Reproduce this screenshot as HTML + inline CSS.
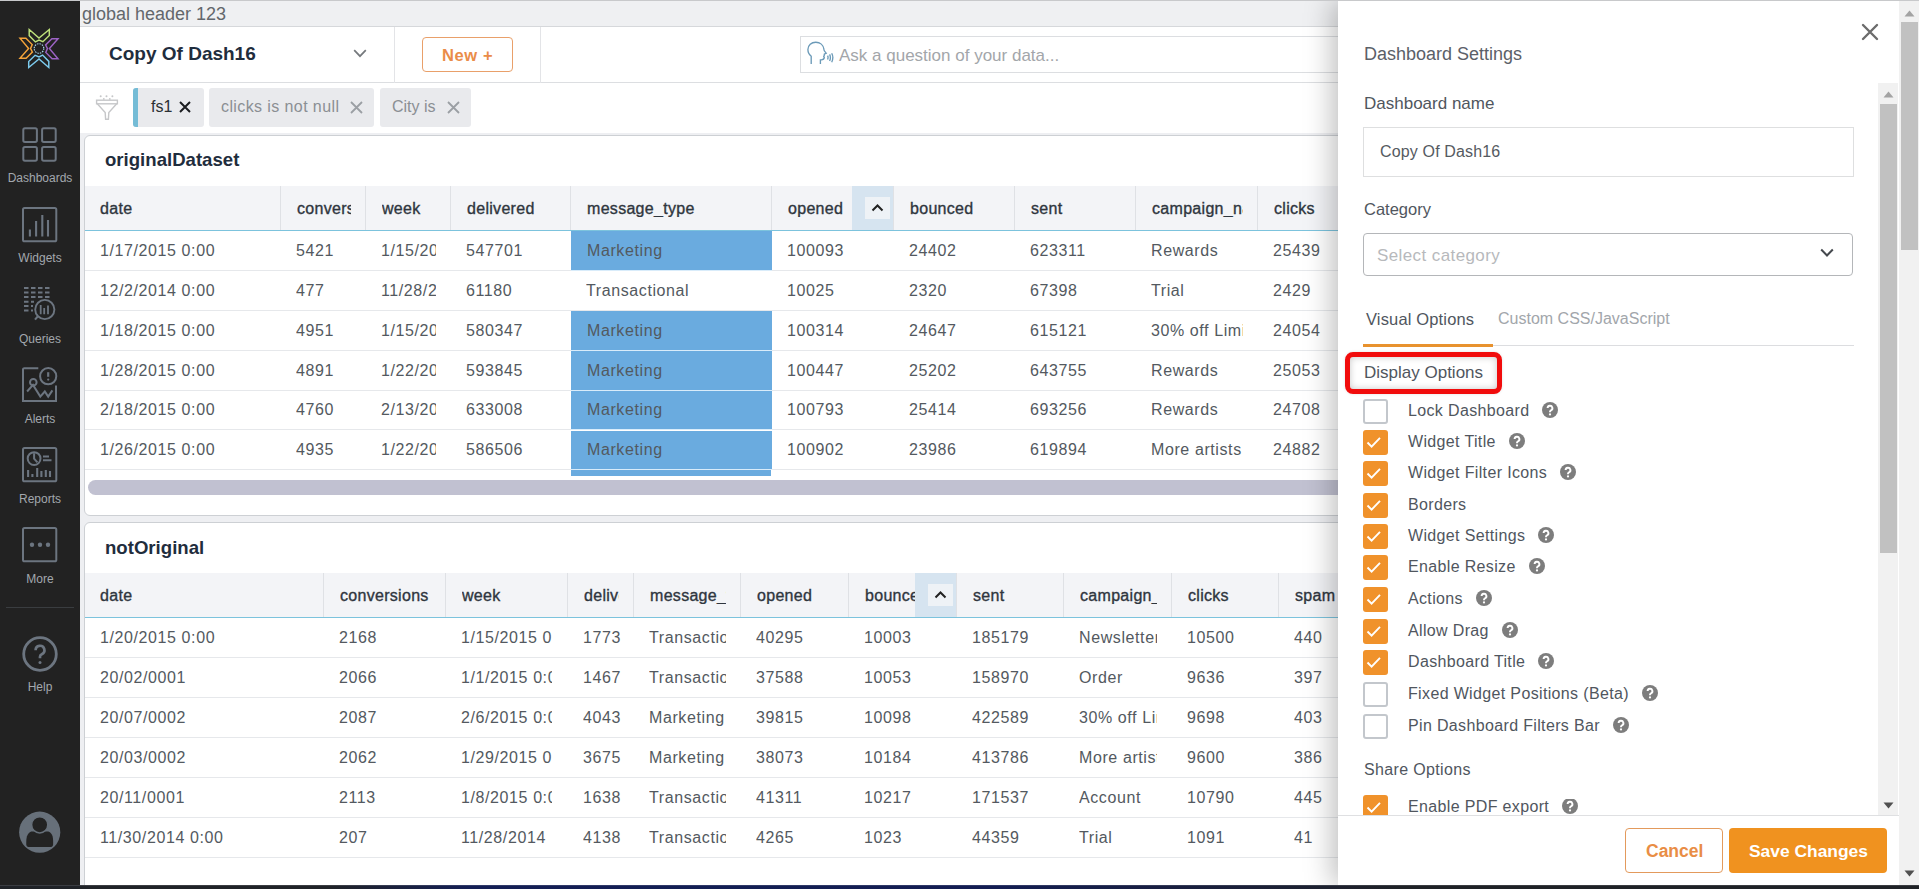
<!DOCTYPE html><html><head><meta charset="utf-8"><style>
*{box-sizing:border-box;margin:0;padding:0}
html,body{width:1919px;height:889px;overflow:hidden;background:#eeeff2;font-family:"Liberation Sans",sans-serif;position:relative}
.a{position:absolute}
.t{position:absolute;white-space:nowrap;line-height:1}
#side{left:0;top:0;width:80px;height:885px;background:#222222}
.sl{position:absolute;left:0;width:80px;text-align:center;color:#a3a8ae;font-size:12px;line-height:1}
.ic{position:absolute;left:0;width:80px;height:40px}
#gh{left:80px;top:0;width:1258px;height:27px;background:#eff0f2;border-bottom:1px solid #d6d8db}
#hdr{left:80px;top:27px;width:1258px;height:56px;background:#fff;border-bottom:1px solid #dcdee1}
#fbar{left:80px;top:83px;width:1258px;height:50px;background:#fff}
.chip{position:absolute;top:88px;height:39px;background:#e9eaed;border-radius:3px}
.card{position:absolute;left:84px;width:1320px;background:#fff;border:1px solid #cdd0d4;border-radius:6px;overflow:hidden}
.th{position:absolute;background:#f3f4f7;border-left:1px solid #dfe1e5;overflow:hidden}
.th span{position:absolute;left:16px;right:14px;overflow:hidden;white-space:nowrap;font-size:16px;font-weight:normal;-webkit-text-stroke:0.35px #2f363e;color:#2f363e;line-height:1;letter-spacing:0.3px}
.row{position:absolute;left:0;width:1320px;border-bottom:1px solid #e6e8eb}
.td{position:absolute;overflow:hidden;height:100%}
.td span{position:absolute;left:16px;right:14px;overflow:hidden;white-space:nowrap;font-size:16px;color:#535960;line-height:1;letter-spacing:0.6px}
#panel{left:1338px;top:0;width:561px;height:885px;background:#fff;box-shadow:-6px 0 26px rgba(0,0,0,0.25)}
.pl{position:absolute;white-space:nowrap;line-height:1;color:#50565e;font-size:16px}
.cb{position:absolute;left:1363px;width:25px;height:25px;border-radius:3px}
.cb.on{background:#f0922b}
.cb.off{border:2px solid #c3c7cc;background:#fff}
.help{position:absolute;width:16px;height:16px;border-radius:50%;background:#7f7f7f;color:#fff;font-size:12px;font-weight:bold;text-align:center;line-height:16px}
</style></head><body>
<div class="a" style="left:0;top:0;width:1919px;height:1px;background:#c8c9cb;z-index:90"></div>
<div id="side" class="a"></div>
<svg class="a" style="left:16px;top:25px" width="46" height="46" viewBox="-23 -23.5 46 46">
<defs><path id="chev" d="M-9.8 -19L0 -10.4L10.3 -19V-13.1L3.9 -6.8L0 -8.4L-3.6 -6.6L-9.8 -12.9Z" fill="none" stroke-width="1.45" stroke-linejoin="miter"/></defs>
<use href="#chev" stroke="#bde07a"/>
<use href="#chev" stroke="#9c63c4" transform="rotate(90)"/>
<use href="#chev" stroke="#7ccbee" transform="rotate(180)"/>
<use href="#chev" stroke="#f4a33a" transform="rotate(270)"/>
<circle cx="0" cy="0" r="4.8" fill="none" stroke="#a9d6ee" stroke-width="1.1" stroke-dasharray="1.5 1.0"/>
</svg>
<svg class="a" style="left:22px;top:127px" width="36" height="36" viewBox="0 0 36 36" fill="none" stroke="#6c7580" stroke-width="2.2">
<g stroke-width="2"><rect x="1.3" y="1.3" width="13.6" height="13.6" rx="1.6"/><rect x="20.1" y="1.3" width="13.6" height="13.6" rx="1.6"/>
<rect x="1.3" y="20.1" width="13.6" height="13.6" rx="1.6"/><rect x="20.1" y="20.1" width="13.6" height="13.6" rx="1.6"/></g></svg>
<div class="sl" style="top:172px">Dashboards</div>
<svg class="a" style="left:22px;top:207px" width="36" height="36" viewBox="0 0 36 36" fill="none" stroke="#6c7580" stroke-width="2.2">
<rect x="1" y="1" width="33.3" height="33.3" rx="1.6" stroke-width="2"/><path d="M7.9 29.6V22.5M14.1 29.6V14M20.3 29.6V8M26 29.6V13" stroke-width="2.1"/></svg>
<div class="sl" style="top:252px">Widgets</div>
<svg class="a" style="left:23px;top:286px" width="36" height="38" viewBox="0 0 36 38" fill="none" stroke="#6c7580" stroke-width="2">
<path d="M1 1.9h4.5M8 1.9h4.5M15 1.9h4.5M22 1.9h4.5M1 6.5h4.5M8 6.5h4.5M15 6.5h4.5M22 6.5h4.5M1 11h4.5M8 11h4.5M15 11h4.5M22 11h4.5M1 15.7h4.5M8 15.7h3M1 20h4.5M8 20h2M1 24.6h4.5M8 24.6h2"/>
<circle cx="21.8" cy="23.5" r="9.6" stroke-width="1.9"/><path d="M14.8 30.4L12 33.6" stroke-width="2.2"/><path d="M17.7 19v9.3M21.2 22v6.3M25 19.5v8.8" stroke-width="1.8"/></svg>
<div class="sl" style="top:333px">Queries</div>
<svg class="a" style="left:22px;top:367px" width="36" height="36" viewBox="0 0 36 36" fill="none" stroke="#6c7580" stroke-width="2">
<path d="M16.3 1.2H2.4A1.3 1.3 0 0 0 1 2.5V34H34V18.6"/><circle cx="26.2" cy="9.2" r="8.1"/><path d="M26.2 5.2v4.6" stroke-width="2.2"/><circle cx="26.2" cy="12.6" r="1.1" fill="#6c7580" stroke="none"/>
<circle cx="11.3" cy="15.3" r="3.3"/><path d="M5.1 24.5L11 17.9 18.3 29.6 22.8 24.5 26.2 29.6 30.4 23.4"/></svg>
<div class="sl" style="top:413px">Alerts</div>
<svg class="a" style="left:22px;top:447px" width="36" height="36" viewBox="0 0 36 36" fill="none" stroke="#6c7580" stroke-width="2">
<rect x="1" y="1" width="33.3" height="33.3" rx="1.6"/><circle cx="12.1" cy="11.6" r="6.4"/><path d="M12.1 6.2V11.6L15.4 15.3M21 9.6h6M21 13.2h8.5"/>
<path d="M6.1 30v-7M10.4 30v-3M15.2 30v-9M19.4 30v-6M23.8 30v-7M28 30v-6" stroke-width="2.1"/></svg>
<div class="sl" style="top:493px">Reports</div>
<svg class="a" style="left:22px;top:527px" width="36" height="36" viewBox="0 0 36 36" fill="none" stroke="#6c7580" stroke-width="2.2">
<rect x="1" y="1" width="33.3" height="33.3" rx="1.6" stroke-width="2"/><circle cx="10" cy="17.8" r="2.2" fill="#6c7580" stroke="none"/><circle cx="18" cy="17.8" r="2.2" fill="#6c7580" stroke="none"/><circle cx="26" cy="17.8" r="2.2" fill="#6c7580" stroke="none"/></svg>
<div class="sl" style="top:573px">More</div>
<div class="a" style="left:6px;top:607px;width:68px;height:1px;background:#3a3d40"></div>
<svg class="a" style="left:22px;top:636px" width="36" height="36" viewBox="0 0 36 36" fill="none" stroke="#6c7580" stroke-width="2.2">
<circle cx="18" cy="18" r="16.3" stroke-width="2.8"/><path d="M13.6 14.2a4.4 4.4 0 1 1 6.2 4c-1.1.5-1.8 1.3-1.8 2.6v1.4" stroke-width="2.7"/><circle cx="18" cy="26.6" r="1.5" fill="#6c7580" stroke="none"/></svg>
<div class="sl" style="top:681px">Help</div>
<svg class="a" style="left:19px;top:811px" width="42" height="42" viewBox="0 0 42 42">
<circle cx="20.7" cy="21.2" r="20.6" fill="#67707a"/>
<path d="M7.3 33.6C7 27.5 7.8 22.3 12.3 20.6H29.4C33.9 22.3 34.4 27.5 34.1 33.6 34 35 33.2 35.9 32 35.9H9.4C8.2 35.9 7.4 35 7.3 33.6Z" fill="#232323"/>
<circle cx="20.7" cy="13.8" r="8.1" fill="#232323" stroke="#67707a" stroke-width="1.5"/></svg>
<div id="gh" class="a"></div>
<div class="t" style="left:82px;top:5px;font-size:18px;color:#63676c">global header 123</div>
<div id="hdr" class="a"></div>
<div class="t" style="left:109px;top:44px;font-size:19px;font-weight:bold;color:#1f2d3d">Copy Of Dash16</div>
<svg class="a" style="left:353px;top:49px" width="14" height="9" viewBox="0 0 14 9"><path d="M1.2 1.2l5.8 6 5.8-6" fill="none" stroke="#75797d" stroke-width="1.7"/></svg>
<div class="a" style="left:394px;top:27px;width:1px;height:56px;background:#e3e4e7"></div>
<div class="a" style="left:422px;top:37px;width:91px;height:35px;border:1px solid #e9a06a;border-radius:4px"></div>
<div class="t" style="left:442px;top:47px;font-size:16.5px;letter-spacing:0.6px;font-weight:bold;color:#ea8c48">New +</div>
<div class="a" style="left:540px;top:27px;width:1px;height:56px;background:#e3e4e7"></div>
<div class="a" style="left:800px;top:36px;width:600px;height:37px;border:1px solid #dcdee1;background:#fff"></div>
<svg class="a" style="left:806px;top:41px" width="28" height="24" viewBox="0 0 28 24" fill="none" stroke="#6b9ab8" stroke-width="1.35">
<path d="M5.2 23V15.2C2.8 13.4 1.9 11 1.9 8.6 1.9 4.2 5.4 1.2 9.8 1.2c4.3 0 7.6 2.9 8.1 7l.4 1.6 1.9 2.4-1.9.9v1.2l-.6 1.1.6 1c-.1 1.6-1.3 2.4-3 2.4h-.9V23"/>
<path d="M21.6 14.6q.9 1.9 0 3.9M23.6 13.4q1.6 3.2 0 6.6M25.7 12.2q2.3 4.3 0 9"/></svg>
<div class="t" style="left:839px;top:47px;font-size:17px;color:#a3a6aa">Ask a question of your data...</div>
<div id="fbar" class="a"></div>
<svg class="a" style="left:95px;top:94px" width="24" height="27" viewBox="0 0 24 27" fill="none" stroke="#c6c7c9" stroke-width="1.4">
<rect x="1.6" y="6.2" width="20.8" height="3.6"/><path d="M2.3 9.8L10.2 18.6 10.6 25.3H13.4L13.8 18.6 21.7 9.8"/>
<g fill="#c6c7c9" stroke="none"><circle cx="5.7" cy="2.3" r="1"/><circle cx="11.5" cy="2.3" r="1"/><circle cx="17.4" cy="2.3" r="1"/><circle cx="8.8" cy="4.9" r="0.9"/><circle cx="14.8" cy="4.9" r="0.9"/></g></svg>
<div class="chip" style="left:133px;width:71px"></div><div class="a" style="left:133px;top:88px;width:5px;height:39px;background:#75bcd6;border-radius:3px 0 0 3px"></div>
<div class="t" style="left:151px;top:99px;font-size:16px;color:#2b2f33">fs1</div>
<svg class="a" style="left:179px;top:101px" width="12" height="12" viewBox="0 0 12 12"><path d="M1 1l10 10M11 1L1 11" stroke="#1b1d20" stroke-width="2"/></svg>
<div class="chip" style="left:209px;width:165px"></div>
<div class="t" style="left:221px;top:99px;font-size:16px;letter-spacing:0.4px;color:#8b8f94">clicks is not null</div>
<svg class="a" style="left:350px;top:101px" width="13" height="13" viewBox="0 0 13 13"><path d="M1 1l11 11M12 1L1 12" stroke="#9b9fa4" stroke-width="1.8"/></svg>
<div class="chip" style="left:380px;width:91px"></div>
<div class="t" style="left:392px;top:99px;font-size:16px;color:#8b8f94">City is</div>
<svg class="a" style="left:447px;top:101px" width="13" height="13" viewBox="0 0 13 13"><path d="M1 1l11 11M12 1L1 12" stroke="#9b9fa4" stroke-width="1.8"/></svg>
<div class="card" style="top:135px;height:381px">
<div class="t" style="left:20px;top:15px;font-size:18.6px;font-weight:bold;color:#1f2d3d">originalDataset</div>
<div class="a" style="left:0;top:50px;width:1320px;height:44px;background:#f3f4f7"></div>
<div class="th" style="border-left:none;left:-1px;top:50px;width:196px;height:44px"><span style="top:15px">date</span></div>
<div class="th" style="left:195px;top:50px;width:85px;height:44px"><span style="top:15px">conversions</span></div>
<div class="th" style="left:280px;top:50px;width:85px;height:44px"><span style="top:15px">week</span></div>
<div class="th" style="left:365px;top:50px;width:120px;height:44px"><span style="top:15px">delivered</span></div>
<div class="th" style="left:485px;top:50px;width:201px;height:44px"><span style="top:15px">message_type</span></div>
<div class="th" style="left:686px;top:50px;width:122px;height:44px"><span style="top:15px">opened</span></div>
<div class="th" style="left:808px;top:50px;width:121px;height:44px"><span style="top:15px">bounced</span></div>
<div class="th" style="left:929px;top:50px;width:121px;height:44px"><span style="top:15px">sent</span></div>
<div class="th" style="left:1050px;top:50px;width:122px;height:44px"><span style="top:15px">campaign_name</span></div>
<div class="th" style="left:1172px;top:50px;width:143px;height:44px"><span style="top:15px">clicks</span></div>
<div class="a" style="left:767px;top:50px;width:41px;height:44px;background:#d6e4f0"></div>
<div class="a" style="left:780px;top:61px;width:25px;height:22px;background:#eef2f6"></div>
<svg class="a" style="left:786px;top:67px" width="13" height="9" viewBox="0 0 13 9"><path d="M1.5 7.5l5-5 5 5" fill="none" stroke="#222" stroke-width="2"/></svg>
<div class="a" style="left:0;top:94px;width:1320px;height:1px;background:#7cc3dd"></div>
<div class="row" style="top:95.00px;height:39.90px">
<div class="td" style="left:-1px;width:196px"><span style="top:11.9px">1/17/2015 0:00</span></div>
<div class="td" style="left:195px;width:85px"><span style="top:11.9px">5421</span></div>
<div class="td" style="left:280px;width:85px"><span style="top:11.9px">1/15/2015 0:00</span></div>
<div class="td" style="left:365px;width:120px"><span style="top:11.9px">547701</span></div>
<div class="td" style="background:#6aabdf;box-shadow:0 1px 0 #d9ecfa;left:486px;width:201px"><span style="top:11.9px">Marketing</span></div>
<div class="td" style="left:686px;width:122px"><span style="top:11.9px">100093</span></div>
<div class="td" style="left:808px;width:121px"><span style="top:11.9px">24402</span></div>
<div class="td" style="left:929px;width:121px"><span style="top:11.9px">623311</span></div>
<div class="td" style="left:1050px;width:122px"><span style="top:11.9px">Rewards</span></div>
<div class="td" style="left:1172px;width:143px"><span style="top:11.9px">25439</span></div>
</div>
<div class="row" style="top:134.90px;height:39.90px">
<div class="td" style="left:-1px;width:196px"><span style="top:11.9px">12/2/2014 0:00</span></div>
<div class="td" style="left:195px;width:85px"><span style="top:11.9px">477</span></div>
<div class="td" style="left:280px;width:85px"><span style="top:11.9px">11/28/2014 0:00</span></div>
<div class="td" style="left:365px;width:120px"><span style="top:11.9px">61180</span></div>
<div class="td" style="left:485px;width:201px"><span style="top:11.9px">Transactional</span></div>
<div class="td" style="left:686px;width:122px"><span style="top:11.9px">10025</span></div>
<div class="td" style="left:808px;width:121px"><span style="top:11.9px">2320</span></div>
<div class="td" style="left:929px;width:121px"><span style="top:11.9px">67398</span></div>
<div class="td" style="left:1050px;width:122px"><span style="top:11.9px">Trial</span></div>
<div class="td" style="left:1172px;width:143px"><span style="top:11.9px">2429</span></div>
</div>
<div class="row" style="top:174.80px;height:39.90px">
<div class="td" style="left:-1px;width:196px"><span style="top:11.9px">1/18/2015 0:00</span></div>
<div class="td" style="left:195px;width:85px"><span style="top:11.9px">4951</span></div>
<div class="td" style="left:280px;width:85px"><span style="top:11.9px">1/15/2015 0:00</span></div>
<div class="td" style="left:365px;width:120px"><span style="top:11.9px">580347</span></div>
<div class="td" style="background:#6aabdf;box-shadow:0 1px 0 #d9ecfa;left:486px;width:201px"><span style="top:11.9px">Marketing</span></div>
<div class="td" style="left:686px;width:122px"><span style="top:11.9px">100314</span></div>
<div class="td" style="left:808px;width:121px"><span style="top:11.9px">24647</span></div>
<div class="td" style="left:929px;width:121px"><span style="top:11.9px">615121</span></div>
<div class="td" style="left:1050px;width:122px"><span style="top:11.9px">30% off Limited</span></div>
<div class="td" style="left:1172px;width:143px"><span style="top:11.9px">24054</span></div>
</div>
<div class="row" style="top:214.70px;height:39.90px">
<div class="td" style="left:-1px;width:196px"><span style="top:11.9px">1/28/2015 0:00</span></div>
<div class="td" style="left:195px;width:85px"><span style="top:11.9px">4891</span></div>
<div class="td" style="left:280px;width:85px"><span style="top:11.9px">1/22/2015 0:00</span></div>
<div class="td" style="left:365px;width:120px"><span style="top:11.9px">593845</span></div>
<div class="td" style="background:#6aabdf;box-shadow:0 1px 0 #d9ecfa;left:486px;width:201px"><span style="top:11.9px">Marketing</span></div>
<div class="td" style="left:686px;width:122px"><span style="top:11.9px">100447</span></div>
<div class="td" style="left:808px;width:121px"><span style="top:11.9px">25202</span></div>
<div class="td" style="left:929px;width:121px"><span style="top:11.9px">643755</span></div>
<div class="td" style="left:1050px;width:122px"><span style="top:11.9px">Rewards</span></div>
<div class="td" style="left:1172px;width:143px"><span style="top:11.9px">25053</span></div>
</div>
<div class="row" style="top:254.60px;height:39.90px">
<div class="td" style="left:-1px;width:196px"><span style="top:11.9px">2/18/2015 0:00</span></div>
<div class="td" style="left:195px;width:85px"><span style="top:11.9px">4760</span></div>
<div class="td" style="left:280px;width:85px"><span style="top:11.9px">2/13/2015 0:00</span></div>
<div class="td" style="left:365px;width:120px"><span style="top:11.9px">633008</span></div>
<div class="td" style="background:#6aabdf;box-shadow:0 1px 0 #d9ecfa;left:486px;width:201px"><span style="top:11.9px">Marketing</span></div>
<div class="td" style="left:686px;width:122px"><span style="top:11.9px">100793</span></div>
<div class="td" style="left:808px;width:121px"><span style="top:11.9px">25414</span></div>
<div class="td" style="left:929px;width:121px"><span style="top:11.9px">693256</span></div>
<div class="td" style="left:1050px;width:122px"><span style="top:11.9px">Rewards</span></div>
<div class="td" style="left:1172px;width:143px"><span style="top:11.9px">24708</span></div>
</div>
<div class="row" style="top:294.50px;height:39.90px">
<div class="td" style="left:-1px;width:196px"><span style="top:11.9px">1/26/2015 0:00</span></div>
<div class="td" style="left:195px;width:85px"><span style="top:11.9px">4935</span></div>
<div class="td" style="left:280px;width:85px"><span style="top:11.9px">1/22/2015 0:00</span></div>
<div class="td" style="left:365px;width:120px"><span style="top:11.9px">586506</span></div>
<div class="td" style="background:#6aabdf;box-shadow:0 1px 0 #d9ecfa;left:486px;width:201px"><span style="top:11.9px">Marketing</span></div>
<div class="td" style="left:686px;width:122px"><span style="top:11.9px">100902</span></div>
<div class="td" style="left:808px;width:121px"><span style="top:11.9px">23986</span></div>
<div class="td" style="left:929px;width:121px"><span style="top:11.9px">619894</span></div>
<div class="td" style="left:1050px;width:122px"><span style="top:11.9px">More artists</span></div>
<div class="td" style="left:1172px;width:143px"><span style="top:11.9px">24882</span></div>
</div>
<div class="a" style="left:486px;top:334px;width:200px;height:6px;background:#6aabdf"></div><div class="a" style="left:3px;top:344px;width:1320px;height:15px;border-radius:8px;background:#c1c1d1"></div>
</div>
<div class="card" style="top:522px;height:400px">
<div class="t" style="left:20px;top:16px;font-size:18.6px;font-weight:bold;color:#1f2d3d">notOriginal</div>
<div class="a" style="left:0;top:50px;width:1320px;height:44px;background:#f3f4f7"></div>
<div class="th" style="border-left:none;left:-1px;top:50px;width:239px;height:44px"><span style="top:15px">date</span></div>
<div class="th" style="left:238px;top:50px;width:122px;height:44px"><span style="top:15px">conversions</span></div>
<div class="th" style="left:360px;top:50px;width:122px;height:44px"><span style="top:15px">week</span></div>
<div class="th" style="left:482px;top:50px;width:66px;height:44px"><span style="top:15px">delivered</span></div>
<div class="th" style="left:548px;top:50px;width:107px;height:44px"><span style="top:15px">message_type</span></div>
<div class="th" style="left:655px;top:50px;width:108px;height:44px"><span style="top:15px">opened</span></div>
<div class="th" style="left:763px;top:50px;width:108px;height:44px"><span style="top:15px">bounced</span></div>
<div class="th" style="left:871px;top:50px;width:107px;height:44px"><span style="top:15px">sent</span></div>
<div class="th" style="left:978px;top:50px;width:108px;height:44px"><span style="top:15px">campaign_name</span></div>
<div class="th" style="left:1086px;top:50px;width:107px;height:44px"><span style="top:15px">clicks</span></div>
<div class="th" style="left:1193px;top:50px;width:122px;height:44px"><span style="top:15px">spam</span></div>
<div class="a" style="left:830px;top:50px;width:41px;height:44px;background:#d6e4f0"></div>
<div class="a" style="left:843px;top:61px;width:25px;height:22px;background:#eef2f6"></div>
<svg class="a" style="left:849px;top:67px" width="13" height="9" viewBox="0 0 13 9"><path d="M1.5 7.5l5-5 5 5" fill="none" stroke="#222" stroke-width="2"/></svg>
<div class="a" style="left:0;top:94px;width:1320px;height:1px;background:#7cc3dd"></div>
<div class="row" style="top:95.00px;height:40.05px">
<div class="td" style="left:-1px;width:239px"><span style="top:12.0px">1/20/2015 0:00</span></div>
<div class="td" style="left:238px;width:122px"><span style="top:12.0px">2168</span></div>
<div class="td" style="left:360px;width:122px"><span style="right:15px;top:12.0px">1/15/2015 0:00</span></div>
<div class="td" style="left:482px;width:66px"><span style="right:10px;top:12.0px">1773</span></div>
<div class="td" style="left:548px;width:107px"><span style="top:12.0px">Transactional</span></div>
<div class="td" style="left:655px;width:108px"><span style="top:12.0px">40295</span></div>
<div class="td" style="left:763px;width:108px"><span style="top:12.0px">10003</span></div>
<div class="td" style="left:871px;width:107px"><span style="top:12.0px">185179</span></div>
<div class="td" style="left:978px;width:108px"><span style="top:12.0px">Newsletter</span></div>
<div class="td" style="left:1086px;width:107px"><span style="top:12.0px">10500</span></div>
<div class="td" style="left:1193px;width:122px"><span style="top:12.0px">440</span></div>
</div>
<div class="row" style="top:135.05px;height:40.05px">
<div class="td" style="left:-1px;width:239px"><span style="top:12.0px">20/02/0001</span></div>
<div class="td" style="left:238px;width:122px"><span style="top:12.0px">2066</span></div>
<div class="td" style="left:360px;width:122px"><span style="right:15px;top:12.0px">1/1/2015 0:00</span></div>
<div class="td" style="left:482px;width:66px"><span style="right:10px;top:12.0px">1467</span></div>
<div class="td" style="left:548px;width:107px"><span style="top:12.0px">Transactional</span></div>
<div class="td" style="left:655px;width:108px"><span style="top:12.0px">37588</span></div>
<div class="td" style="left:763px;width:108px"><span style="top:12.0px">10053</span></div>
<div class="td" style="left:871px;width:107px"><span style="top:12.0px">158970</span></div>
<div class="td" style="left:978px;width:108px"><span style="top:12.0px">Order</span></div>
<div class="td" style="left:1086px;width:107px"><span style="top:12.0px">9636</span></div>
<div class="td" style="left:1193px;width:122px"><span style="top:12.0px">397</span></div>
</div>
<div class="row" style="top:175.10px;height:40.05px">
<div class="td" style="left:-1px;width:239px"><span style="top:12.0px">20/07/0002</span></div>
<div class="td" style="left:238px;width:122px"><span style="top:12.0px">2087</span></div>
<div class="td" style="left:360px;width:122px"><span style="right:15px;top:12.0px">2/6/2015 0:00</span></div>
<div class="td" style="left:482px;width:66px"><span style="right:10px;top:12.0px">4043</span></div>
<div class="td" style="left:548px;width:107px"><span style="top:12.0px">Marketing</span></div>
<div class="td" style="left:655px;width:108px"><span style="top:12.0px">39815</span></div>
<div class="td" style="left:763px;width:108px"><span style="top:12.0px">10098</span></div>
<div class="td" style="left:871px;width:107px"><span style="top:12.0px">422589</span></div>
<div class="td" style="left:978px;width:108px"><span style="top:12.0px">30% off Limited</span></div>
<div class="td" style="left:1086px;width:107px"><span style="top:12.0px">9698</span></div>
<div class="td" style="left:1193px;width:122px"><span style="top:12.0px">403</span></div>
</div>
<div class="row" style="top:215.15px;height:40.05px">
<div class="td" style="left:-1px;width:239px"><span style="top:12.0px">20/03/0002</span></div>
<div class="td" style="left:238px;width:122px"><span style="top:12.0px">2062</span></div>
<div class="td" style="left:360px;width:122px"><span style="right:15px;top:12.0px">1/29/2015 0:00</span></div>
<div class="td" style="left:482px;width:66px"><span style="right:10px;top:12.0px">3675</span></div>
<div class="td" style="left:548px;width:107px"><span style="top:12.0px">Marketing</span></div>
<div class="td" style="left:655px;width:108px"><span style="top:12.0px">38073</span></div>
<div class="td" style="left:763px;width:108px"><span style="top:12.0px">10184</span></div>
<div class="td" style="left:871px;width:107px"><span style="top:12.0px">413786</span></div>
<div class="td" style="left:978px;width:108px"><span style="top:12.0px">More artists</span></div>
<div class="td" style="left:1086px;width:107px"><span style="top:12.0px">9600</span></div>
<div class="td" style="left:1193px;width:122px"><span style="top:12.0px">386</span></div>
</div>
<div class="row" style="top:255.20px;height:40.05px">
<div class="td" style="left:-1px;width:239px"><span style="top:12.0px">20/11/0001</span></div>
<div class="td" style="left:238px;width:122px"><span style="top:12.0px">2113</span></div>
<div class="td" style="left:360px;width:122px"><span style="right:15px;top:12.0px">1/8/2015 0:00</span></div>
<div class="td" style="left:482px;width:66px"><span style="right:10px;top:12.0px">1638</span></div>
<div class="td" style="left:548px;width:107px"><span style="top:12.0px">Transactional</span></div>
<div class="td" style="left:655px;width:108px"><span style="top:12.0px">41311</span></div>
<div class="td" style="left:763px;width:108px"><span style="top:12.0px">10217</span></div>
<div class="td" style="left:871px;width:107px"><span style="top:12.0px">171537</span></div>
<div class="td" style="left:978px;width:108px"><span style="top:12.0px">Account</span></div>
<div class="td" style="left:1086px;width:107px"><span style="top:12.0px">10790</span></div>
<div class="td" style="left:1193px;width:122px"><span style="top:12.0px">445</span></div>
</div>
<div class="row" style="top:295.25px;height:40.05px">
<div class="td" style="left:-1px;width:239px"><span style="top:12.0px">11/30/2014 0:00</span></div>
<div class="td" style="left:238px;width:122px"><span style="top:12.0px">207</span></div>
<div class="td" style="left:360px;width:122px"><span style="right:15px;top:12.0px">11/28/2014</span></div>
<div class="td" style="left:482px;width:66px"><span style="right:10px;top:12.0px">4138</span></div>
<div class="td" style="left:548px;width:107px"><span style="top:12.0px">Transactional</span></div>
<div class="td" style="left:655px;width:108px"><span style="top:12.0px">4265</span></div>
<div class="td" style="left:763px;width:108px"><span style="top:12.0px">1023</span></div>
<div class="td" style="left:871px;width:107px"><span style="top:12.0px">44359</span></div>
<div class="td" style="left:978px;width:108px"><span style="top:12.0px">Trial</span></div>
<div class="td" style="left:1086px;width:107px"><span style="top:12.0px">1091</span></div>
<div class="td" style="left:1193px;width:122px"><span style="top:12.0px">41</span></div>
</div>
</div>
<div id="panel" class="a"></div>
<div class="pl" style="left:1364px;top:45px;font-size:18px;color:#5b6068">Dashboard Settings</div>
<svg class="a" style="left:1861px;top:23px" width="18" height="18" viewBox="0 0 18 18"><path d="M2 2l14 14M16 2L2 16" stroke="#6c6c6c" stroke-width="2.4" stroke-linecap="round"/></svg>
<div class="pl" style="left:1364px;top:95px;font-size:17px">Dashboard name</div>
<div class="a" style="left:1363px;top:127px;width:491px;height:50px;border:1px solid #dedfe0"></div>
<div class="pl" style="left:1380px;top:144px;font-size:16px;letter-spacing:0.15px;color:#555a61">Copy Of Dash16</div>
<div class="pl" style="left:1364px;top:201px;font-size:16.5px">Category</div>
<div class="a" style="left:1363px;top:233px;width:490px;height:43px;border:1px solid #b4b6b9;border-radius:4px"></div>
<div class="pl" style="left:1377px;top:247px;font-size:17px;letter-spacing:0.4px;color:#b7b9bc">Select category</div>
<svg class="a" style="left:1820px;top:248px" width="14" height="10" viewBox="0 0 14 10"><path d="M1.2 1.5l5.8 6 5.8-6" fill="none" stroke="#45494e" stroke-width="2"/></svg>
<div class="pl" style="left:1366px;top:311px;font-size:16.5px;letter-spacing:0.15px">Visual Options</div>
<div class="pl" style="left:1498px;top:311px;font-size:16px;color:#a2a6ab">Custom CSS/JavaScript</div>
<div class="a" style="left:1363px;top:345px;width:491px;height:1px;background:#dcdde0"></div>
<div class="a" style="left:1363px;top:344px;width:130px;height:3px;background:#e8922e"></div>
<div class="a" style="left:1345px;top:352px;width:157px;height:42px;border:5px solid #f10c0c;border-radius:8px;box-shadow:inset 0 0 7px rgba(0,0,0,0.22),0 0 3px rgba(0,0,0,0.12)"></div>
<div class="pl" style="left:1364px;top:364px;font-size:17px">Display Options</div>
<div class="cb off" style="top:399px"></div>
<div class="pl hl" style="left:1408px;top:403px;letter-spacing:0.35px;display:flex;align-items:center">Lock Dashboard<svg style="margin-left:13px;position:relative;top:-1.5px" width="16" height="16" viewBox="0 0 16 16"><circle cx="8" cy="8" r="8" fill="#7d7d7d"/><path d="M5.6 6.1a2.4 2.4 0 1 1 3.4 2.2c-.7.35-1 .8-1 1.5v.4" fill="none" stroke="#fff" stroke-width="1.9"/><circle cx="8" cy="12.4" r="1.1" fill="#fff"/></svg></div>
<div class="cb on" style="top:430px"><svg class="a" style="left:0;top:0" width="25" height="25" viewBox="0 0 25 25"><path d="M4.5 12.5L8.6 16.6L17 7.8" fill="none" stroke="#fff" stroke-width="1.9"/></svg></div>
<div class="pl hl" style="left:1408px;top:434px;letter-spacing:0.35px;display:flex;align-items:center">Widget Title<svg style="margin-left:13px;position:relative;top:-1.5px" width="16" height="16" viewBox="0 0 16 16"><circle cx="8" cy="8" r="8" fill="#7d7d7d"/><path d="M5.6 6.1a2.4 2.4 0 1 1 3.4 2.2c-.7.35-1 .8-1 1.5v.4" fill="none" stroke="#fff" stroke-width="1.9"/><circle cx="8" cy="12.4" r="1.1" fill="#fff"/></svg></div>
<div class="cb on" style="top:461px"><svg class="a" style="left:0;top:0" width="25" height="25" viewBox="0 0 25 25"><path d="M4.5 12.5L8.6 16.6L17 7.8" fill="none" stroke="#fff" stroke-width="1.9"/></svg></div>
<div class="pl hl" style="left:1408px;top:465px;letter-spacing:0.35px;display:flex;align-items:center">Widget Filter Icons<svg style="margin-left:13px;position:relative;top:-1.5px" width="16" height="16" viewBox="0 0 16 16"><circle cx="8" cy="8" r="8" fill="#7d7d7d"/><path d="M5.6 6.1a2.4 2.4 0 1 1 3.4 2.2c-.7.35-1 .8-1 1.5v.4" fill="none" stroke="#fff" stroke-width="1.9"/><circle cx="8" cy="12.4" r="1.1" fill="#fff"/></svg></div>
<div class="cb on" style="top:493px"><svg class="a" style="left:0;top:0" width="25" height="25" viewBox="0 0 25 25"><path d="M4.5 12.5L8.6 16.6L17 7.8" fill="none" stroke="#fff" stroke-width="1.9"/></svg></div>
<div class="pl hl" style="left:1408px;top:497px;letter-spacing:0.35px;display:flex;align-items:center">Borders</div>
<div class="cb on" style="top:524px"><svg class="a" style="left:0;top:0" width="25" height="25" viewBox="0 0 25 25"><path d="M4.5 12.5L8.6 16.6L17 7.8" fill="none" stroke="#fff" stroke-width="1.9"/></svg></div>
<div class="pl hl" style="left:1408px;top:528px;letter-spacing:0.35px;display:flex;align-items:center">Widget Settings<svg style="margin-left:13px;position:relative;top:-1.5px" width="16" height="16" viewBox="0 0 16 16"><circle cx="8" cy="8" r="8" fill="#7d7d7d"/><path d="M5.6 6.1a2.4 2.4 0 1 1 3.4 2.2c-.7.35-1 .8-1 1.5v.4" fill="none" stroke="#fff" stroke-width="1.9"/><circle cx="8" cy="12.4" r="1.1" fill="#fff"/></svg></div>
<div class="cb on" style="top:555px"><svg class="a" style="left:0;top:0" width="25" height="25" viewBox="0 0 25 25"><path d="M4.5 12.5L8.6 16.6L17 7.8" fill="none" stroke="#fff" stroke-width="1.9"/></svg></div>
<div class="pl hl" style="left:1408px;top:559px;letter-spacing:0.35px;display:flex;align-items:center">Enable Resize<svg style="margin-left:13px;position:relative;top:-1.5px" width="16" height="16" viewBox="0 0 16 16"><circle cx="8" cy="8" r="8" fill="#7d7d7d"/><path d="M5.6 6.1a2.4 2.4 0 1 1 3.4 2.2c-.7.35-1 .8-1 1.5v.4" fill="none" stroke="#fff" stroke-width="1.9"/><circle cx="8" cy="12.4" r="1.1" fill="#fff"/></svg></div>
<div class="cb on" style="top:587px"><svg class="a" style="left:0;top:0" width="25" height="25" viewBox="0 0 25 25"><path d="M4.5 12.5L8.6 16.6L17 7.8" fill="none" stroke="#fff" stroke-width="1.9"/></svg></div>
<div class="pl hl" style="left:1408px;top:591px;letter-spacing:0.35px;display:flex;align-items:center">Actions<svg style="margin-left:13px;position:relative;top:-1.5px" width="16" height="16" viewBox="0 0 16 16"><circle cx="8" cy="8" r="8" fill="#7d7d7d"/><path d="M5.6 6.1a2.4 2.4 0 1 1 3.4 2.2c-.7.35-1 .8-1 1.5v.4" fill="none" stroke="#fff" stroke-width="1.9"/><circle cx="8" cy="12.4" r="1.1" fill="#fff"/></svg></div>
<div class="cb on" style="top:619px"><svg class="a" style="left:0;top:0" width="25" height="25" viewBox="0 0 25 25"><path d="M4.5 12.5L8.6 16.6L17 7.8" fill="none" stroke="#fff" stroke-width="1.9"/></svg></div>
<div class="pl hl" style="left:1408px;top:623px;letter-spacing:0.35px;display:flex;align-items:center">Allow Drag<svg style="margin-left:13px;position:relative;top:-1.5px" width="16" height="16" viewBox="0 0 16 16"><circle cx="8" cy="8" r="8" fill="#7d7d7d"/><path d="M5.6 6.1a2.4 2.4 0 1 1 3.4 2.2c-.7.35-1 .8-1 1.5v.4" fill="none" stroke="#fff" stroke-width="1.9"/><circle cx="8" cy="12.4" r="1.1" fill="#fff"/></svg></div>
<div class="cb on" style="top:650px"><svg class="a" style="left:0;top:0" width="25" height="25" viewBox="0 0 25 25"><path d="M4.5 12.5L8.6 16.6L17 7.8" fill="none" stroke="#fff" stroke-width="1.9"/></svg></div>
<div class="pl hl" style="left:1408px;top:654px;letter-spacing:0.35px;display:flex;align-items:center">Dashboard Title<svg style="margin-left:13px;position:relative;top:-1.5px" width="16" height="16" viewBox="0 0 16 16"><circle cx="8" cy="8" r="8" fill="#7d7d7d"/><path d="M5.6 6.1a2.4 2.4 0 1 1 3.4 2.2c-.7.35-1 .8-1 1.5v.4" fill="none" stroke="#fff" stroke-width="1.9"/><circle cx="8" cy="12.4" r="1.1" fill="#fff"/></svg></div>
<div class="cb off" style="top:682px"></div>
<div class="pl hl" style="left:1408px;top:686px;letter-spacing:0.35px;display:flex;align-items:center">Fixed Widget Positions (Beta)<svg style="margin-left:13px;position:relative;top:-1.5px" width="16" height="16" viewBox="0 0 16 16"><circle cx="8" cy="8" r="8" fill="#7d7d7d"/><path d="M5.6 6.1a2.4 2.4 0 1 1 3.4 2.2c-.7.35-1 .8-1 1.5v.4" fill="none" stroke="#fff" stroke-width="1.9"/><circle cx="8" cy="12.4" r="1.1" fill="#fff"/></svg></div>
<div class="cb off" style="top:714px"></div>
<div class="pl hl" style="left:1408px;top:718px;letter-spacing:0.35px;display:flex;align-items:center">Pin Dashboard Filters Bar<svg style="margin-left:13px;position:relative;top:-1.5px" width="16" height="16" viewBox="0 0 16 16"><circle cx="8" cy="8" r="8" fill="#7d7d7d"/><path d="M5.6 6.1a2.4 2.4 0 1 1 3.4 2.2c-.7.35-1 .8-1 1.5v.4" fill="none" stroke="#fff" stroke-width="1.9"/><circle cx="8" cy="12.4" r="1.1" fill="#fff"/></svg></div>
<div class="pl" style="left:1364px;top:762px;letter-spacing:0.35px">Share Options</div>
<div class="a" style="left:1363px;top:795px;width:25px;height:20px;overflow:hidden"><div class="cb on" style="left:0;top:0"><svg class="a" style="left:0;top:0" width="25" height="25" viewBox="0 0 25 25"><path d="M4.5 12.5L8.6 16.6L17 7.8" fill="none" stroke="#fff" stroke-width="1.9"/></svg></div></div>
<div class="pl" style="left:1408px;top:799px;height:17px;letter-spacing:0.35px;overflow:hidden;display:flex;align-items:flex-start">Enable PDF export<svg style="margin-left:13px;position:relative;top:-1.5px" width="16" height="16" viewBox="0 0 16 16"><circle cx="8" cy="8" r="8" fill="#7d7d7d"/><path d="M5.6 6.1a2.4 2.4 0 1 1 3.4 2.2c-.7.35-1 .8-1 1.5v.4" fill="none" stroke="#fff" stroke-width="1.9"/><circle cx="8" cy="12.4" r="1.1" fill="#fff"/></svg></div>
<div class="a" style="left:1338px;top:815px;width:561px;height:1px;background:#dfe0e2"></div>
<div class="a" style="left:1625px;top:828px;width:98px;height:45px;border:1px solid #e39a5c;border-radius:4px;background:#fff"></div>
<div class="pl" style="left:1646px;top:843px;font-size:17.5px;font-weight:bold;color:#e98d45">Cancel</div>
<div class="a" style="left:1729px;top:828px;width:158px;height:45px;background:#f0921f;border-radius:4px"></div>
<div class="pl" style="left:1749px;top:843px;font-size:17.4px;font-weight:bold;color:#fff">Save Changes</div>
<div class="a" style="left:1878px;top:83px;width:20px;height:732px;background:#f1f1f1"></div>
<div class="a" style="left:1880px;top:104px;width:17px;height:449px;background:#c1c1c1"></div>
<svg class="a" style="left:1883px;top:91px" width="11" height="7" viewBox="0 0 11 7"><path d="M0.5 6.5h10L5.5 0.5z" fill="#a3a3a3"/></svg>
<svg class="a" style="left:1883px;top:802px" width="11" height="7" viewBox="0 0 11 7"><path d="M0.5 0.5h10L5.5 6.5z" fill="#505050"/></svg>
<div class="a" style="left:1899px;top:1px;width:20px;height:884px;background:#f1f1f1"></div>
<div class="a" style="left:1901px;top:22px;width:17px;height:228px;background:#c1c1c1"></div>
<svg class="a" style="left:1904px;top:10px" width="11" height="7" viewBox="0 0 11 7"><path d="M0.5 6.5h10L5.5 0.5z" fill="#a3a3a3"/></svg>
<svg class="a" style="left:1904px;top:870px" width="11" height="7" viewBox="0 0 11 7"><path d="M0.5 0.5h10L5.5 6.5z" fill="#505050"/></svg>
<div class="a" style="left:0;top:885px;width:1919px;height:4px;background:linear-gradient(90deg,#202328 0px,#202328 330px,#141f55 470px,#131d52 1000px,#1b2038 1250px,#1f2227 1400px,#1f2227 1919px);box-shadow:inset 0 1px 0 rgba(255,255,255,0.12)"></div>
</body></html>
